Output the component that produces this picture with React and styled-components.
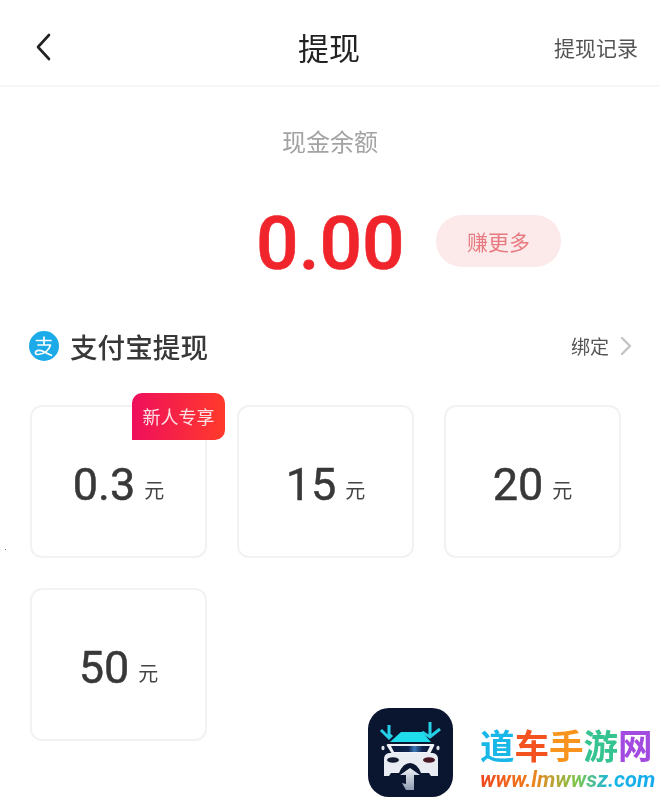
import React from 'react';
import styled, { createGlobalStyle } from 'styled-components';

const Global = createGlobalStyle`
  html, body { margin: 0; padding: 0; background: #fff; }
  body { font-family: Roboto, "Noto Sans CJK SC", sans-serif; }
  * { box-sizing: border-box; }
`;

const Page = styled.div`
  position: relative;
  width: 660px;
  height: 800px;
  overflow: hidden;
  background: #fff;
  filter: blur(0.35px);
`;

const Header = styled.header`
  height: 87px;
  display: grid;
  grid-template-columns: 1fr auto 1fr;
  align-items: center;
  padding: 9px 22px 0 30px;
  border-bottom: 2px solid #f6f6f6;
`;

const BackButton = styled.div`
  display: flex;
  align-items: center;
`;

const Title = styled.h1`
  margin: 0;
  transform: translateX(-5px);
  font: 400 31px/40px "Noto Sans CJK SC", sans-serif;
  color: #222;
`;

const HeaderLink = styled.div`
  justify-self: end;
  font: 400 21px/30px "Noto Sans CJK SC", sans-serif;
  color: #555;
`;

const BalanceLabel = styled.div`
  margin-top: 37px;
  text-align: center;
  font: 400 24px/34px "Noto Sans CJK SC", sans-serif;
  color: #a3a3a3;
`;

const BalanceRow = styled.div`
  margin-top: 53px;
  height: 60px;
  display: flex;
  align-items: center;
  padding-left: 256px;
  gap: 31px;
`;

const Amount = styled.div`
  padding-top: 3px;
  font: 500 75px/60px Roboto, sans-serif;
  -webkit-text-stroke: 0.6px #f0252b;
  color: #f0252b;
  width: 149px;
  white-space: nowrap;
`;

const EarnPill = styled.div`
  width: 125px;
  height: 52px;
  border-radius: 26px;
  background: #fce9e9;
  color: #e67a80;
  font: 400 21px/52px "Noto Sans CJK SC", sans-serif;
  text-align: center;
`;

const SectionHead = styled.div`
  margin-top: 55px;
  height: 40px;
  display: flex;
  align-items: center;
  padding: 0 29px;
`;

const SectionTitle = styled.h2`
  margin: 0 0 0 11px;
  font: 500 27.6px/40px "Noto Sans CJK SC", sans-serif;
  color: #383838;
  flex: 1;
`;

const BindLink = styled.div`
  font: 400 19px/28px "Noto Sans CJK SC", sans-serif;
  color: #555;
`;

const ChevronWrap = styled.div`
  display: flex;
  margin-left: 11px;
  margin-right: -1px;
`;

const Grid = styled.div`
  margin-top: 39px;
  padding-left: 30px;
  display: grid;
  grid-template-columns: repeat(3, 177px);
  grid-auto-rows: 153px;
  gap: 30px;
`;

const Card = styled.div`
  position: relative;
  border: 2px solid #f2f2f2;
  border-radius: 12px;
  background: #fff;
  display: flex;
  align-items: center;
  justify-content: center;
  padding-top: 7px;
`;

const Value = styled.span`
  font: 400 45px/52px Roboto, sans-serif;
  -webkit-text-stroke: 0.5px #383838;
  color: #383838;
`;

const Unit = styled.span`
  margin-left: 9px;
  margin-top: 10px;
  font: 400 20px/28px "Noto Sans CJK SC", sans-serif;
  color: #444;
`;

const Badge = styled.div`
  position: absolute;
  top: -14px;
  right: -20px;
  width: 93px;
  height: 47px;
  border-radius: 10px 10px 10px 0;
  background: linear-gradient(90deg, #ef0f5c, #ff3a2b);
  color: #fbdfe3;
  font: 400 18px/47px "Noto Sans CJK SC", sans-serif;
  text-align: center;
`;

const Watermark = styled.div`
  position: absolute;
  left: 368px;
  top: 708px;
  display: flex;
  gap: 27px;
`;

const WatermarkIcon = styled.div`
  width: 85px;
  height: 89px;
  border-radius: 21px;
  background: #0a1530;
  display: flex;
`;

const WatermarkText = styled.div`
  padding-top: 15px;
  display: flex;
  flex-direction: column;
`;

const Brand = styled.div`
  font: 700 34.5px/42px "Noto Sans CJK SC", sans-serif;
  white-space: nowrap;
  display: flex;
`;

const BrandChar = styled.span`
  color: ${p => p.$c};
`;

const Url = styled.div`
  margin-top: 2px;
  font: italic 700 21.8px/26px Roboto, sans-serif;
  white-space: nowrap;
  background: linear-gradient(90deg, #f0451f 0%, #f0801c 30%, #7fc64a 55%, #17b6e4 75%, #17a9f0 100%);
  -webkit-background-clip: text;
  background-clip: text;
  color: transparent;
`;

const Speck = styled.div`
  position: absolute;
  left: 5px;
  top: 549px;
  width: 1px;
  height: 1px;
  background: #777;
`;

const AlipayIcon = () => (
  <svg width="30" height="30" viewBox="0 0 30 30">
    <circle cx="15" cy="15" r="15" fill="#1caae8" />
    <path d="M7.5 9.5H22M15 6v7M9 14h12.5c-1.5 5-6 9-12 9.5-2.5.2-3.5-1-3-2.4.6-1.8 4-2.6 8-.6 3 1.5 5.5 3 8 3.8" fill="none" stroke="#fff" strokeWidth="1.7" strokeLinecap="round" strokeLinejoin="round" />
  </svg>
);

const CarLogo = () => (
  <svg width="85" height="89" viewBox="0 0 85 89">
    <defs>
      <linearGradient id="arrowFill" x1="0" y1="0" x2="0" y2="1">
        <stop offset="0" stopColor="#eef2f7" />
        <stop offset="1" stopColor="#8f9bb0" />
      </linearGradient>
      <linearGradient id="glass" x1="0" y1="0" x2="1" y2="0">
        <stop offset="0" stopColor="#0b1a3a" />
        <stop offset="0.45" stopColor="#0f2550" />
        <stop offset="0.6" stopColor="#3a79b8" />
        <stop offset="0.8" stopColor="#0f2550" />
        <stop offset="1" stopColor="#0b1a3a" />
      </linearGradient>
    </defs>
    <g fill="none" stroke="#25cfe6" strokeWidth="3" strokeLinecap="butt">
      <path d="M21 17v12M13 22l8 8 3-3" />
      <path d="M62 14v14M54 24l8 5 10-8" />
    </g>
    <path d="M33 24h21l9 10H22z" fill="#1fdcec" />
    <path d="M20 36h45q2 0 1 2l-4 8H24l-5-8q-1-2 1-2z" fill="#f0f4f8" />
    <path d="M23 38h39l-3 6H26z" fill="url(#glass)" />
    <path d="M21 45h44q5 1 5 6v17h-7l-2-3h-8q-4-10-11-10t-11 10h-8l-2 3h-5V51q0-5 5-6z" fill="#e9edf3" />
    <ellipse cx="25" cy="52" rx="6" ry="2.8" fill="#151d30" />
    <ellipse cx="61" cy="52" rx="6" ry="2.8" fill="#4a1826" />
    <ellipse cx="15" cy="40" rx="1.6" ry="2.2" fill="#dfe5ea" />
    <ellipse cx="70" cy="40" rx="1.6" ry="2.2" fill="#dfe5ea" />
    <path d="M42 60l-10 7h6v9l-4-1 4 7h8V67h6z" fill="url(#arrowFill)" />
  </svg>
);

const brand = [['道', '#19b6e8'], ['车', '#f4521e'], ['手', '#f8941d'], ['游', '#35c38f'], ['网', '#a34be0']];

const amounts = [
  { v: '0.3', badge: '新人专享' },
  { v: '15' },
  { v: '20' },
  { v: '50' },
];

export default function App() {
  return (
    <Page>
      <Global />
      <Header>
        <BackButton>
          <svg width="28" height="28" viewBox="0 0 28 28">
            <path d="M19 2 8 14l11 12" fill="none" stroke="#222" strokeWidth="2.6" strokeLinecap="round" strokeLinejoin="round" />
          </svg>
        </BackButton>
        <Title>提现</Title>
        <HeaderLink>提现记录</HeaderLink>
      </Header>
      <BalanceLabel>现金余额</BalanceLabel>
      <BalanceRow>
        <Amount>0.00</Amount>
        <EarnPill>赚更多</EarnPill>
      </BalanceRow>
      <SectionHead>
        <AlipayIcon />
        <SectionTitle>支付宝提现</SectionTitle>
        <BindLink>绑定</BindLink>
        <ChevronWrap>
          <svg width="12" height="20" viewBox="0 0 12 20">
            <path d="M2 2l8 8-8 8" fill="none" stroke="#c4c4c4" strokeWidth="2.4" strokeLinecap="round" strokeLinejoin="round" />
          </svg>
        </ChevronWrap>
      </SectionHead>
      <Grid>
        {amounts.map(a => (
          <Card key={a.v}>
            {a.badge && <Badge>{a.badge}</Badge>}
            <Value>{a.v}</Value>
            <Unit>元</Unit>
          </Card>
        ))}
      </Grid>
      <Speck />
      <Watermark>
        <WatermarkIcon><CarLogo /></WatermarkIcon>
        <WatermarkText>
          <Brand>{brand.map(([c, col]) => <BrandChar key={c} $c={col}>{c}</BrandChar>)}</Brand>
          <Url>www.lmwwsz.com</Url>
        </WatermarkText>
      </Watermark>
    </Page>
  );
}
